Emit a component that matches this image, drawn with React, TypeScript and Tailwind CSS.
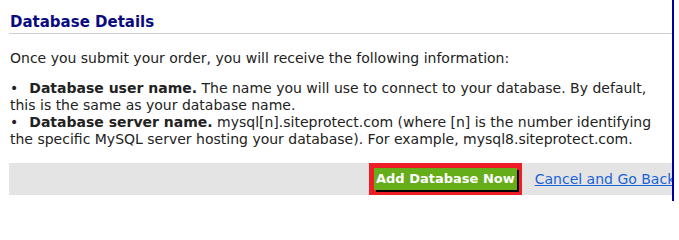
export default function App() {
  return (
    <div className="w-[674px] h-[201px] overflow-hidden border-r-2 border-[#00009c] bg-white font-['DejaVu_Sans',Verdana,sans-serif] text-[14px] text-[#222]">
      <div className="pl-[9px]">
        <h2 className="pt-[13px] pb-[2px] pl-px text-[15px] font-bold leading-[18px] text-[#0a0a80] border-b-[1.5px] border-[#cfcfcf]">
          Database Details
        </h2>
        <p className="mt-[16px] pl-px leading-[17px]">
          Once you submit your order, you will receive the following information:
        </p>
        <ul className="mt-[13px] pl-px leading-[17px]">
          <li>
            <span className="mr-[11px]">•</span>
            <b>Database user name.</b> The name you will use to connect to your database. By default,
            this is the same as your database name.
          </li>
          <li>
            <span className="mr-[11px]">•</span>
            <b>Database server name.</b> mysql[n].siteprotect.com (where [n] is the number identifying
            the specific MySQL server hosting your database). For example, mysql8.siteprotect.com.
          </li>
        </ul>
        <div className="mt-[15px] h-[32px] flex items-center bg-[#e4e4e4] whitespace-nowrap">
          <div className="ml-[360px] h-[32px] p-[5px] bg-[#ee1c25]">
            <button className="h-[22px] px-[2px] bg-[#66ad1a] text-white font-bold text-[13px] leading-[22px] shadow-[2px_2px_0_#000]">
              Add Database Now
            </button>
          </div>
          <a href="#" className="ml-[13px] text-[14px] text-[#1a63d6] underline">
            Cancel and Go Back
          </a>
        </div>
      </div>
    </div>
  )
}
